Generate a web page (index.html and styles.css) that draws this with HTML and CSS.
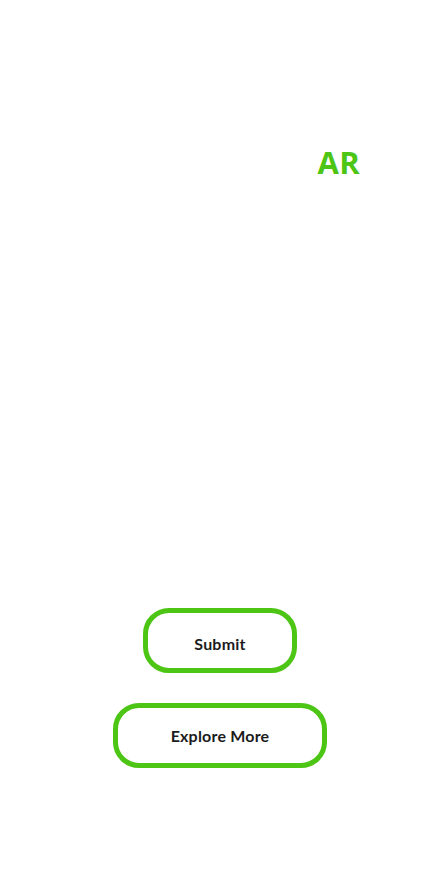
FILE: index.html
```html
<!DOCTYPE html>
<html>
<head>
<meta charset="utf-8">
<link rel="stylesheet" href="styles.css">
</head>
<body>
<div class="page">
  <header class="top">
    <div class="brand">AR</div>
  </header>
  <main class="actions">
    <button class="btn btn-submit">Submit</button>
    <button class="btn btn-explore">Explore More</button>
  </main>
</div>
</body>
</html>
```

FILE: styles.css
```css
html, body {
  margin: 0;
  padding: 0;
  background: #ffffff;
}
.page {
  width: 443px;
  height: 890px;
  display: flex;
  flex-direction: column;
  font-family: Lato, "Open Sans", sans-serif;
}
.top {
  display: flex;
  justify-content: flex-end;
  padding: 143px 83px 0 0;
}
.brand {
  color: #4cc514;
  font-family: "Open Sans", Lato, sans-serif;
  font-weight: 700;
  font-size: 31px;
  line-height: 38px;
  letter-spacing: 0.3px;
}
.actions {
  display: flex;
  flex-direction: column;
  align-items: center;
  gap: 30px;
  padding-top: 427px;
  padding-right: 3px;
}
.btn {
  box-sizing: border-box;
  height: 65px;
  border: 5px solid #4cc514;
  border-radius: 26px;
  background: #fff;
  color: #1c1c1c;
  font-family: Lato, sans-serif;
  font-weight: 700;
  font-size: 16px;
  letter-spacing: 0.2px;
  padding: 0;
}
.btn-submit {
  width: 154px;
  padding-top: 5px;
}
.btn-explore {
  width: 214px;
}
```
